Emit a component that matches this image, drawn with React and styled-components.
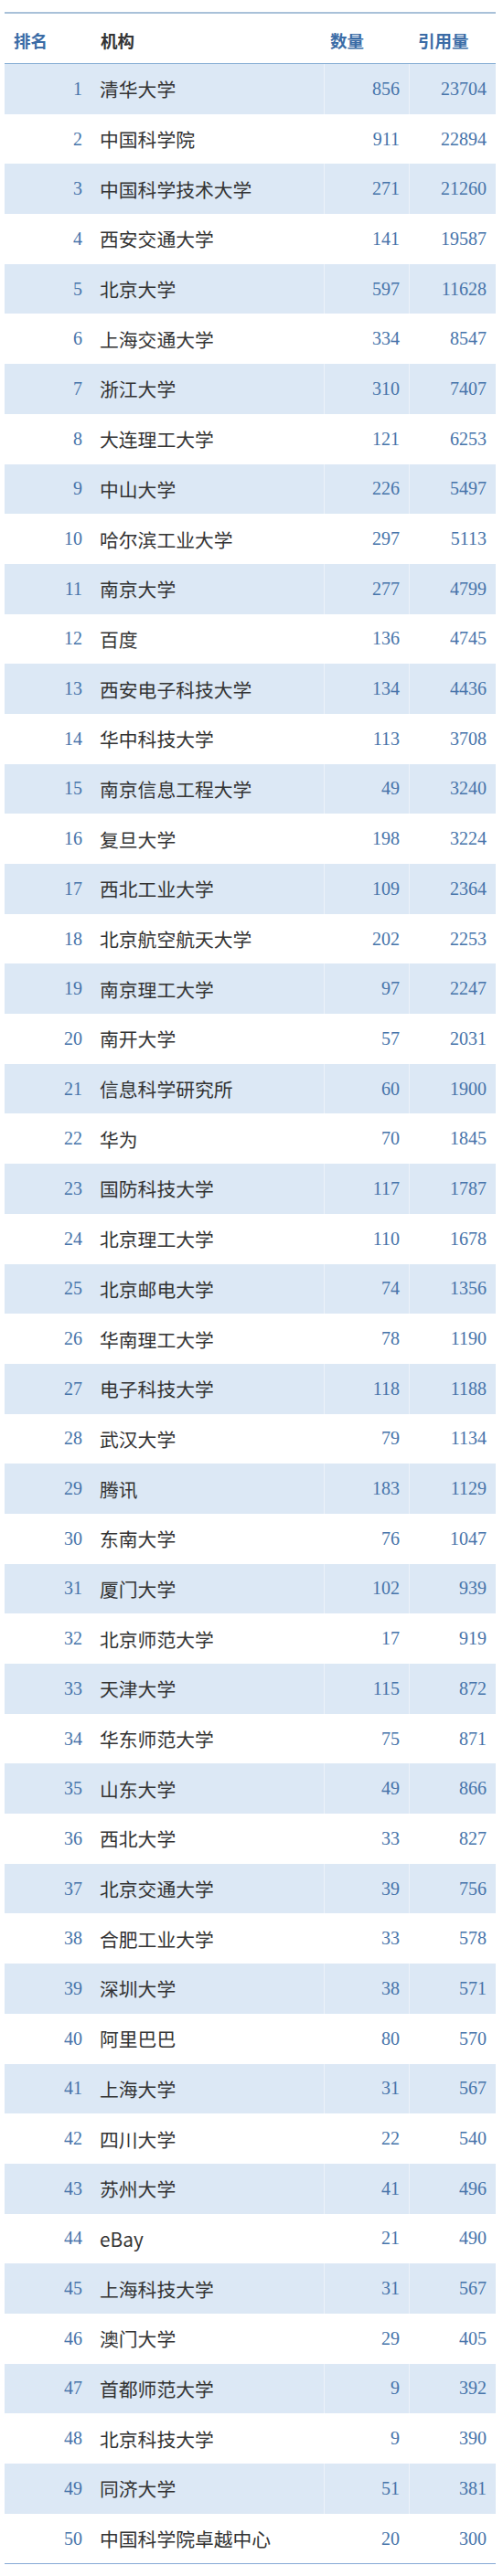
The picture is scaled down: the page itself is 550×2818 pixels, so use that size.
import React from "react";
import styled, { createGlobalStyle } from "styled-components";

const GlobalStyle = createGlobalStyle`
  body {
    margin: 0;
    background: #fff;
  }
`;

const Page = styled.div`
  padding: 13px 8px 0 5px;
`;

const Table = styled.div`
  width: 537px;
  border-top: 2px solid #a9c1d9;
  border-bottom: 1px solid #86a9d6;
`;

const Row = styled.div`
  display: grid;
  grid-template-columns: 95px 254px 93px 95px;
  height: ${props => (props.head ? "54px" : "54.7px")};
  background: ${props => (props.shaded ? "#dce8f5" : "#fff")};
  border-bottom: ${props => (props.head ? "1px solid #8ab0d6" : "none")};
`;

const Cell = styled.div`
  display: flex;
  align-items: center;
  justify-content: ${props => (props.right ? "flex-end" : "flex-start")};
  padding: 0 10px 0 ${props => (props.tight ? "7px" : "10px")};
  border-left: ${props => (props.divided ? "1px solid rgba(255,255,255,0.45)" : "none")};
`;

const HeadText = styled.span`
  font-family: "Noto Sans CJK SC", "Noto Sans", sans-serif;
  font-size: 18.5px;
  font-weight: bold;
  color: ${props => (props.dark ? "#333" : "#3b6ca6")};
  margin-top: 4px;
`;

const Num = styled.span`
  font-family: "Liberation Serif", "DejaVu Serif", serif;
  font-size: 20px;
  color: #4674aa;
`;

const Name = styled.span`
  font-family: "Noto Sans CJK SC", "Noto Sans", sans-serif;
  font-size: 20.8px;
  color: #333;
  margin-left: -1px;
`;

const DATA = [
  ["清华大学", 856, 23704],
  ["中国科学院", 911, 22894],
  ["中国科学技术大学", 271, 21260],
  ["西安交通大学", 141, 19587],
  ["北京大学", 597, 11628],
  ["上海交通大学", 334, 8547],
  ["浙江大学", 310, 7407],
  ["大连理工大学", 121, 6253],
  ["中山大学", 226, 5497],
  ["哈尔滨工业大学", 297, 5113],
  ["南京大学", 277, 4799],
  ["百度", 136, 4745],
  ["西安电子科技大学", 134, 4436],
  ["华中科技大学", 113, 3708],
  ["南京信息工程大学", 49, 3240],
  ["复旦大学", 198, 3224],
  ["西北工业大学", 109, 2364],
  ["北京航空航天大学", 202, 2253],
  ["南京理工大学", 97, 2247],
  ["南开大学", 57, 2031],
  ["信息科学研究所", 60, 1900],
  ["华为", 70, 1845],
  ["国防科技大学", 117, 1787],
  ["北京理工大学", 110, 1678],
  ["北京邮电大学", 74, 1356],
  ["华南理工大学", 78, 1190],
  ["电子科技大学", 118, 1188],
  ["武汉大学", 79, 1134],
  ["腾讯", 183, 1129],
  ["东南大学", 76, 1047],
  ["厦门大学", 102, 939],
  ["北京师范大学", 17, 919],
  ["天津大学", 115, 872],
  ["华东师范大学", 75, 871],
  ["山东大学", 49, 866],
  ["西北大学", 33, 827],
  ["北京交通大学", 39, 756],
  ["合肥工业大学", 33, 578],
  ["深圳大学", 38, 571],
  ["阿里巴巴", 80, 570],
  ["上海大学", 31, 567],
  ["四川大学", 22, 540],
  ["苏州大学", 41, 496],
  ["eBay", 21, 490],
  ["上海科技大学", 31, 567],
  ["澳门大学", 29, 405],
  ["首都师范大学", 9, 392],
  ["北京科技大学", 9, 390],
  ["同济大学", 51, 381],
  ["中国科学院卓越中心", 20, 300]
];

const App = () => {
  return (
    <Page>
      <GlobalStyle />
      <Table>
        <Row head>
          <Cell>
            <HeadText>排名</HeadText>
          </Cell>
          <Cell>
            <HeadText dark>机构</HeadText>
          </Cell>
          <Cell tight>
            <HeadText>数量</HeadText>
          </Cell>
          <Cell>
            <HeadText>引用量</HeadText>
          </Cell>
        </Row>
        {DATA.map(([name, count, cites], i) => (
          <Row key={`row${i}`} shaded={i % 2 === 0}>
            <Cell right>
              <Num>{i + 1}</Num>
            </Cell>
            <Cell>
              <Name>{name}</Name>
            </Cell>
            <Cell right divided>
              <Num>{count}</Num>
            </Cell>
            <Cell right divided>
              <Num>{cites}</Num>
            </Cell>
          </Row>
        ))}
      </Table>
    </Page>
  );
};

export default App;
